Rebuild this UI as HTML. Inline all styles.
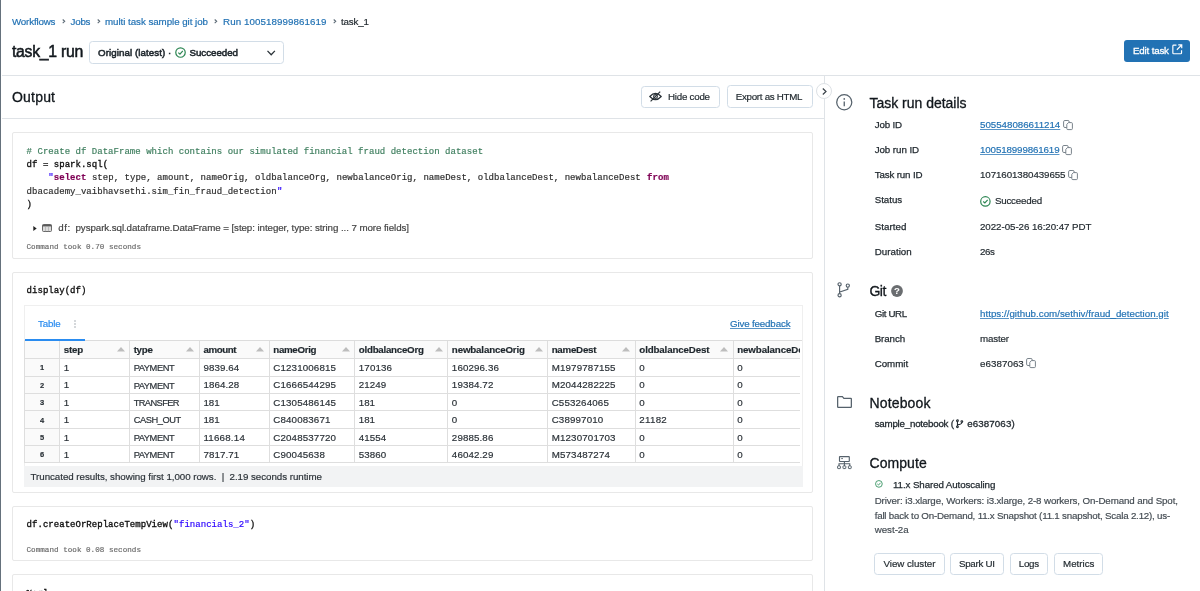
<!DOCTYPE html>
<html lang="en"><head><meta charset="utf-8"><title>task_1 run</title>
<style>
*{box-sizing:border-box;margin:0;padding:0}
html,body{width:1200px;height:591px;overflow:hidden;background:#fff}
#app{position:absolute;left:0;top:0;width:1200px;height:591px;overflow:hidden;background:#fff;will-change:transform}
body{position:relative;font-family:"Liberation Sans",sans-serif;color:#1f272d;font-size:9.75px;-webkit-text-stroke-width:0.18px}
.t{position:absolute;white-space:pre;line-height:1;display:block}
.m{font-family:"Liberation Mono",monospace}
a.t,a{color:#2272b4;text-decoration:none}
a.u{text-decoration:underline;text-underline-offset:1.2px;text-decoration-thickness:0.6px;text-decoration-color:rgba(34,114,180,.75)}
.abs{position:absolute}
.hl{position:absolute;height:1px;background:#dfe3e7}
.vl{position:absolute;width:1px;background:#dfe3e7}
.btn{position:absolute;border:1px solid #d2dde7;border-radius:3.5px;background:#fff}
.cell{position:absolute;left:11.7px;width:801.3px;border:1px solid #e8e8e8;border-radius:2px;background:#fff}
svg{position:absolute;overflow:visible}
h1,h2,h3{font-weight:400}
h2{-webkit-text-stroke-width:0.3px}

table th,table td{position:relative;border:1px solid #dedede;text-align:left;padding:0 0 0 3.4px;white-space:nowrap;overflow:hidden;color:#2b3238;font-weight:400;line-height:1;vertical-align:middle}
thead th{background:#fafafa;font-weight:700;color:#1f272d;padding-top:1px}
th.ix{background:#fafafa;font-weight:700;font-size:7.5px;text-align:center;padding:1.6px 0 0 0}
tbody td{padding-top:1px}
</style></head>
<body><div id="app">
<div class="abs" style="left:0;top:0;width:1.2px;height:591px;background:#65717c"></div>
<header>
<nav>
<a class="t" style="left:12.00px;top:16.95px;font-size:9.75px;letter-spacing:-0.162px;color:#2272b4">Workflows</a>
<a class="t" style="left:70.50px;top:16.95px;font-size:9.75px;letter-spacing:-0.203px;color:#2272b4">Jobs</a>
<a class="t" style="left:105.00px;top:16.95px;font-size:9.75px;letter-spacing:-0.044px;color:#2272b4">multi task sample git job</a>
<a class="t" style="left:223.00px;top:16.95px;font-size:9.75px;letter-spacing:0.087px;color:#2272b4">Run 100518999861619</a>
<span class="t" style="left:341.00px;top:16.95px;font-size:9.75px;letter-spacing:-0.147px;color:#1f272d">task_1</span>
<svg style="left:61.6px;top:19.3px" width="3.4" height="4.6" viewBox="0 0 3.4 4.6"><path d="M0.7 0.5 L2.7 2.3 L0.7 4.1" fill="none" stroke="#5d6b76" stroke-width="1.1"/></svg>
<svg style="left:96.6px;top:19.3px" width="3.4" height="4.6" viewBox="0 0 3.4 4.6"><path d="M0.7 0.5 L2.7 2.3 L0.7 4.1" fill="none" stroke="#5d6b76" stroke-width="1.1"/></svg>
<svg style="left:213.6px;top:19.3px" width="3.4" height="4.6" viewBox="0 0 3.4 4.6"><path d="M0.7 0.5 L2.7 2.3 L0.7 4.1" fill="none" stroke="#5d6b76" stroke-width="1.1"/></svg>
<svg style="left:332.6px;top:19.3px" width="3.4" height="4.6" viewBox="0 0 3.4 4.6"><path d="M0.7 0.5 L2.7 2.3 L0.7 4.1" fill="none" stroke="#5d6b76" stroke-width="1.1"/></svg>
</nav>
<h1 class="t" style="left:12.00px;top:43.63px;font-size:15.8px;letter-spacing:-0.285px;color:#11171c;-webkit-text-stroke:0.5px #11171c">task_1 run</h1>
<div class="btn" style="left:89px;top:41px;width:194.5px;height:22.6px"></div>
<span class="t" style="left:98.00px;top:48.05px;font-size:9.75px;letter-spacing:0.069px;color:#1f272d;-webkit-text-stroke:0.55px #1f272d">Original (latest) ·</span>
<svg style="left:175px;top:47.2px" width="11" height="11" viewBox="0 0 10 10"><circle cx="5" cy="5" r="4.3" fill="none" stroke="#2d8653" stroke-width="1.1"/><path d="M3 5.1 L4.5 6.5 L7.1 3.6" fill="none" stroke="#2d8653" stroke-width="1.1"/></svg>
<span class="t" style="left:189.50px;top:48.05px;font-size:9.75px;letter-spacing:-0.037px;color:#1f272d;-webkit-text-stroke:0.55px #1f272d">Succeeded</span>
<svg style="left:266.8px;top:50px" width="8.4" height="6" viewBox="0 0 8.4 6"><path d="M0.5 0.9 L4.2 4.8 L7.9 0.9" fill="none" stroke="#2a3238" stroke-width="1.25"/></svg>
<button class="abs" style="left:1123.5px;top:40px;width:66px;height:22px;border:0;border-radius:3px;background:#2272b4"></button>
<span class="t" style="left:1133.00px;top:46.15px;font-size:9.75px;letter-spacing:-0.176px;color:#fff;-webkit-text-stroke:0.3px #fff">Edit task</span>
<svg style="left:1171.6px;top:44.1px" width="10.6" height="10.6" viewBox="0 0 10 10"><path d="M4.2 1 H1.6 Q0.8 1 0.8 1.8 V8.4 Q0.8 9.2 1.6 9.2 H8.2 Q9 9.2 9 8.4 V5.8" fill="none" stroke="#fff" stroke-width="1.1"/><path d="M5.9 0.8 H9.2 V4.1 M9.2 0.8 L4.6 5.4" fill="none" stroke="#fff" stroke-width="1.1"/></svg>
<div class="hl" style="left:2px;top:74.6px;width:1198px"></div>
</header>
<main>
<h2 class="t" style="left:12.00px;top:89.95px;font-size:14px;letter-spacing:0.194px;color:#11171c">Output</h2>
<div class="btn" style="left:640.5px;top:85.5px;width:79px;height:22.5px"></div>
<svg style="left:649.3px;top:91.3px" width="13" height="11" viewBox="0 0 13 11"><path d="M0.8 5.5 Q6.5 -0.8 12.2 5.5 Q6.5 11.8 0.8 5.5 Z" fill="none" stroke="#2a3238" stroke-width="1.15"/><circle cx="6.5" cy="5.5" r="1.9" fill="none" stroke="#2a3238" stroke-width="1.1"/><path d="M1.6 10.4 L11.2 0.6" stroke="#2a3238" stroke-width="1.2"/></svg>
<span class="t" style="left:668.00px;top:92.25px;font-size:9.75px;letter-spacing:-0.238px;color:#1f272d">Hide code</span>
<div class="btn" style="left:726.5px;top:85px;width:86px;height:22.5px"></div>
<span class="t" style="left:735.80px;top:92.05px;font-size:9.75px;letter-spacing:-0.287px;color:#1f272d">Export as HTML</span>
<div class="hl" style="left:2px;top:117.8px;width:822px"></div>
<div class="vl" style="left:823.5px;top:75px;height:516px"></div>
<div class="abs" style="left:816px;top:83.2px;width:16px;height:16px;border-radius:50%;background:#fff;border:1px solid #dde1e5"></div>
<svg style="left:822px;top:88.3px" width="5" height="7" viewBox="0 0 5 7"><path d="M0.8 0.5 L4 3.5 L0.8 6.5" fill="none" stroke="#3a4249" stroke-width="1.2"/></svg>
<section class="cell" style="top:132px;height:126.5px"></section>
<span class="t m" style="left:26.60px;top:147.08px;font-size:9.03px;letter-spacing:0.024px;color:#3f7f5f"># Create df DataFrame which contains our simulated financial fraud detection dataset</span>
<span class="t m" style="left:26.60px;top:160.08px;font-size:9.03px;letter-spacing:0.024px;color:#0d0d0d;-webkit-text-stroke-width:0.32px">df = spark.sql(</span>
<span class="t m" style="left:26.60px;top:173.48px;font-size:9.03px;letter-spacing:0.024px;color:#0d0d0d">    </span>
<span class="t m" style="left:48.37px;top:173.48px;font-size:9.03px;letter-spacing:0.024px;color:#2a00ff">&quot;</span>
<span class="t m" style="left:53.81px;top:173.48px;font-size:9.03px;letter-spacing:0.024px;color:#7f0055;font-weight:700">select</span>
<span class="t m" style="left:86.47px;top:173.48px;font-size:9.03px;letter-spacing:0.024px;color:#2e2e2e"> step, type, amount, nameOrig, oldbalanceOrg, newbalanceOrig, nameDest, oldbalanceDest, newbalanceDest </span>
<span class="t m" style="left:647.10px;top:173.48px;font-size:9.03px;letter-spacing:0.024px;color:#7f0055;font-weight:700">from</span>
<span class="t m" style="left:26.60px;top:187.08px;font-size:9.03px;letter-spacing:0.024px;color:#2e2e2e">dbacademy_vaibhavsethi.sim_fin_fraud_detection</span>
<span class="t m" style="left:276.98px;top:187.08px;font-size:9.03px;letter-spacing:0.024px;color:#2a00ff">&quot;</span>
<span class="t m" style="left:26.60px;top:200.28px;font-size:9.03px;letter-spacing:0.024px;color:#0d0d0d;-webkit-text-stroke-width:0.32px">)</span>
<svg style="left:33px;top:225.5px" width="4" height="5" viewBox="0 0 4 5"><path d="M0.3 0 L3.7 2.5 L0.3 5 Z" fill="#222"/></svg>
<svg style="left:41.7px;top:224px" width="10" height="8" viewBox="0 0 10 8"><rect x="0.5" y="0.5" width="9" height="7" rx="1" fill="#dcdcdc" stroke="#5a5a5a" stroke-width="0.9"/><path d="M0.5 1.6 H9.5" stroke="#5a5a5a" stroke-width="1.6"/><path d="M3.5 2.6 V7.5 M6.5 2.6 V7.5" stroke="#999" stroke-width="0.5"/></svg>
<span class="t" style="left:58.25px;top:223.05px;font-size:9.75px;letter-spacing:0.578px;color:#444">df:</span>
<span class="t" style="left:75.50px;top:223.05px;font-size:9.75px;letter-spacing:-0.075px;color:#444">pyspark.sql.dataframe.DataFrame = [step: integer, type: string ... 7 more fields]</span>
<span class="t m" style="left:26.50px;top:244.07px;font-size:7.6px;letter-spacing:0.023px;color:#6d6d6d">Command took 0.70 seconds</span>
<section class="cell" style="top:272px;height:220.5px"></section>
<span class="t m" style="left:26.60px;top:286.48px;font-size:9.03px;letter-spacing:0.024px;color:#0d0d0d;-webkit-text-stroke-width:0.32px">display(df)</span>
<div class="abs" style="left:24px;top:305px;width:778.5px;height:181.5px;border:1px solid #efefef;border-bottom:0"></div>
<span class="t" style="left:38.00px;top:319.05px;font-size:9.75px;letter-spacing:-0.128px;color:#2a8cf0">Table</span>
<svg style="left:74px;top:319.5px" width="2" height="8" viewBox="0 0 2 8"><circle cx="1" cy="1" r="0.7" fill="#8a949c"/><circle cx="1" cy="4" r="0.7" fill="#8a949c"/><circle cx="1" cy="7" r="0.7" fill="#8a949c"/></svg>
<a class="t u" style="left:730.00px;top:318.55px;font-size:9.75px;letter-spacing:-0.152px;color:#2272b4">Give feedback</a>
<div class="abs" style="left:24px;top:340.3px;width:776.2px;height:122.98px;overflow:hidden">
<table style="position:absolute;left:0;top:0;border-collapse:collapse;table-layout:fixed;width:806.0px;font-size:9.75px">
<colgroup><col style="width:35.30px"><col style="width:69.95px"><col style="width:69.75px"><col style="width:69.90px"><col style="width:85.60px"><col style="width:93.00px"><col style="width:99.80px"><col style="width:87.70px"><col style="width:97.80px"><col style="width:97.20px"></colgroup>
<thead><tr style="height:17.90px">
<th></th>
<th><span class="r" style="font-size:9.75px;letter-spacing:-0.188px;font-weight:700">step</span><svg style="right:4.5px;top:6px" width="8" height="4.5" viewBox="0 0 8 4.5"><path d="M0 4.5 L4 0 L8 4.5 Z" fill="#bdbdbd"/></svg></th>
<th><span class="r" style="font-size:9.75px;letter-spacing:-0.271px;font-weight:700">type</span><svg style="right:4.5px;top:6px" width="8" height="4.5" viewBox="0 0 8 4.5"><path d="M0 4.5 L4 0 L8 4.5 Z" fill="#bdbdbd"/></svg></th>
<th><span class="r" style="font-size:9.75px;letter-spacing:-0.394px;font-weight:700">amount</span><svg style="right:4.5px;top:6px" width="8" height="4.5" viewBox="0 0 8 4.5"><path d="M0 4.5 L4 0 L8 4.5 Z" fill="#bdbdbd"/></svg></th>
<th><span class="r" style="font-size:9.75px;letter-spacing:-0.324px;font-weight:700">nameOrig</span><svg style="right:4.5px;top:6px" width="8" height="4.5" viewBox="0 0 8 4.5"><path d="M0 4.5 L4 0 L8 4.5 Z" fill="#bdbdbd"/></svg></th>
<th><span class="r" style="font-size:9.75px;letter-spacing:-0.272px;font-weight:700">oldbalanceOrg</span><svg style="right:4.5px;top:6px" width="8" height="4.5" viewBox="0 0 8 4.5"><path d="M0 4.5 L4 0 L8 4.5 Z" fill="#bdbdbd"/></svg></th>
<th><span class="r" style="font-size:9.75px;letter-spacing:-0.171px;font-weight:700">newbalanceOrig</span><svg style="right:4.5px;top:6px" width="8" height="4.5" viewBox="0 0 8 4.5"><path d="M0 4.5 L4 0 L8 4.5 Z" fill="#bdbdbd"/></svg></th>
<th><span class="r" style="font-size:9.75px;letter-spacing:-0.258px;font-weight:700">nameDest</span><svg style="right:4.5px;top:6px" width="8" height="4.5" viewBox="0 0 8 4.5"><path d="M0 4.5 L4 0 L8 4.5 Z" fill="#bdbdbd"/></svg></th>
<th><span class="r" style="font-size:9.75px;letter-spacing:-0.152px;font-weight:700">oldbalanceDest</span><svg style="right:4.5px;top:6px" width="8" height="4.5" viewBox="0 0 8 4.5"><path d="M0 4.5 L4 0 L8 4.5 Z" fill="#bdbdbd"/></svg></th>
<th><span class="r" style="font-size:9.75px;letter-spacing:-0.108px;font-weight:700">newbalanceDest</span><svg style="right:4.5px;top:6px" width="8" height="4.5" viewBox="0 0 8 4.5"><path d="M0 4.5 L4 0 L8 4.5 Z" fill="#bdbdbd"/></svg></th>
</tr></thead><tbody>
<tr style="height:17.38px"><th class="ix">1</th><td>1</td><td><span class="r" style="font-size:9.3px;letter-spacing:-0.427px;position:relative;top:0.5px">PAYMENT</span></td><td><span class="r" style="font-size:9.75px;letter-spacing:0.100px">9839.64</span></td><td><span class="r" style="font-size:9.75px;letter-spacing:0.147px">C1231006815</span></td><td><span class="r" style="font-size:9.75px;letter-spacing:0.091px">170136</span></td><td><span class="r" style="font-size:9.75px;letter-spacing:0.120px">160296.36</span></td><td><span class="r" style="font-size:9.75px;letter-spacing:0.154px">M1979787155</span></td><td>0</td><td>0</td></tr>
<tr style="height:17.38px"><th class="ix">2</th><td>1</td><td><span class="r" style="font-size:9.3px;letter-spacing:-0.427px;position:relative;top:0.5px">PAYMENT</span></td><td><span class="r" style="font-size:9.75px;letter-spacing:0.100px">1864.28</span></td><td><span class="r" style="font-size:9.75px;letter-spacing:0.147px">C1666544295</span></td><td><span class="r" style="font-size:9.75px;letter-spacing:0.069px">21249</span></td><td><span class="r" style="font-size:9.75px;letter-spacing:0.111px">19384.72</span></td><td><span class="r" style="font-size:9.75px;letter-spacing:0.154px">M2044282225</span></td><td>0</td><td>0</td></tr>
<tr style="height:17.38px"><th class="ix">3</th><td>1</td><td><span class="r" style="font-size:9.3px;letter-spacing:-0.601px;position:relative;top:0.5px">TRANSFER</span></td><td><span class="r" style="font-size:9.75px;letter-spacing:-0.041px">181</span></td><td><span class="r" style="font-size:9.75px;letter-spacing:0.147px">C1305486145</span></td><td><span class="r" style="font-size:9.75px;letter-spacing:-0.041px">181</span></td><td>0</td><td><span class="r" style="font-size:9.75px;letter-spacing:0.145px">C553264065</span></td><td>0</td><td>0</td></tr>
<tr style="height:17.38px"><th class="ix">4</th><td>1</td><td><span class="r" style="font-size:9.3px;letter-spacing:-0.446px;position:relative;top:0.5px">CASH_OUT</span></td><td><span class="r" style="font-size:9.75px;letter-spacing:-0.041px">181</span></td><td><span class="r" style="font-size:9.75px;letter-spacing:0.145px">C840083671</span></td><td><span class="r" style="font-size:9.75px;letter-spacing:-0.041px">181</span></td><td>0</td><td><span class="r" style="font-size:9.75px;letter-spacing:0.141px">C38997010</span></td><td><span class="r" style="font-size:9.75px;letter-spacing:0.252px">21182</span></td><td>0</td></tr>
<tr style="height:17.38px"><th class="ix">5</th><td>1</td><td><span class="r" style="font-size:9.3px;letter-spacing:-0.427px;position:relative;top:0.5px">PAYMENT</span></td><td><span class="r" style="font-size:9.75px;letter-spacing:0.214px">11668.14</span></td><td><span class="r" style="font-size:9.75px;letter-spacing:0.147px">C2048537720</span></td><td><span class="r" style="font-size:9.75px;letter-spacing:0.069px">41554</span></td><td><span class="r" style="font-size:9.75px;letter-spacing:0.111px">29885.86</span></td><td><span class="r" style="font-size:9.75px;letter-spacing:0.154px">M1230701703</span></td><td>0</td><td>0</td></tr>
<tr style="height:17.38px"><th class="ix">6</th><td>1</td><td><span class="r" style="font-size:9.3px;letter-spacing:-0.427px;position:relative;top:0.5px">PAYMENT</span></td><td><span class="r" style="font-size:9.75px;letter-spacing:0.100px">7817.71</span></td><td><span class="r" style="font-size:9.75px;letter-spacing:0.141px">C90045638</span></td><td><span class="r" style="font-size:9.75px;letter-spacing:0.069px">53860</span></td><td><span class="r" style="font-size:9.75px;letter-spacing:0.111px">46042.29</span></td><td><span class="r" style="font-size:9.75px;letter-spacing:0.151px">M573487274</span></td><td>0</td><td>0</td></tr>
</tbody></table></div>
<div class="abs" style="left:24.5px;top:340.3px;width:777.5px;height:1px;background:#dcdcdc"></div>
<div class="abs" style="left:24.5px;top:339px;width:60.5px;height:2px;background:#2a8cf0"></div>
<div class="abs" style="left:24px;top:465.6px;width:778.5px;height:21px;background:#f2f3f4"></div>
<span class="t" style="left:30.50px;top:471.95px;font-size:9.75px;letter-spacing:-0.041px;color:#2b3238">Truncated results, showing first 1,000 rows.  |  2.19 seconds runtime</span>
<section class="cell" style="top:505.5px;height:55px"></section>
<span class="t m" style="left:26.60px;top:520.33px;font-size:9.03px;letter-spacing:0.024px;color:#0d0d0d;-webkit-text-stroke-width:0.32px">df.createOrReplaceTempView(</span>
<span class="t m" style="left:173.56px;top:520.33px;font-size:9.03px;letter-spacing:0.024px;color:#2a00ff">&quot;financials_2&quot;</span>
<span class="t m" style="left:249.76px;top:520.33px;font-size:9.03px;letter-spacing:0.024px;color:#0d0d0d;-webkit-text-stroke-width:0.32px">)</span>
<span class="t m" style="left:26.50px;top:546.77px;font-size:7.6px;letter-spacing:0.023px;color:#6d6d6d">Command took 0.08 seconds</span>
<section class="cell" style="top:573.5px;height:60px"></section>
<span class="t m" style="left:26.60px;top:589.48px;font-size:9.03px;letter-spacing:0.024px;color:#0d0d0d;-webkit-text-stroke-width:0.32px">%sql</span>
</main>
<aside>
<svg style="left:835.6px;top:94.1px" width="16.5" height="16.5" viewBox="0 0 16.5 16.5"><circle cx="8.25" cy="8.25" r="7.55" fill="none" stroke="#55616b" stroke-width="1.25"/><path d="M8.25 7.4 V12.3" stroke="#55616b" stroke-width="1.3"/><circle cx="8.25" cy="4.9" r="0.85" fill="#55616b"/></svg>
<h2 class="t" style="left:869.50px;top:95.65px;font-size:14px;letter-spacing:-0.019px;color:#11171c">Task run details</h2>
<span class="t" style="left:874.70px;top:120.05px;font-size:9.75px;letter-spacing:-0.177px;color:#1f272d;-webkit-text-stroke:0.25px #1f272d">Job ID</span>
<a class="t u" style="left:980.00px;top:120.05px;font-size:9.75px;letter-spacing:-0.023px;color:#2272b4">505548086611214</a>
<svg style="left:1062.5px;top:119.7px" width="10" height="10" viewBox="0 0 10 10"><rect x="0.6" y="0.5" width="5.6" height="7" rx="1.3" fill="none" stroke="#727c85" stroke-width="0.95"/><path d="M5.4 2.6 H8.4 Q9.4 2.6 9.4 3.6 V8.6 Q9.4 9.6 8.4 9.6 H4.8 Q3.8 9.6 3.8 8.6 V4.4 Z" fill="#fff" stroke="#727c85" stroke-width="0.95"/></svg>
<span class="t" style="left:874.70px;top:144.95px;font-size:9.75px;letter-spacing:-0.065px;color:#1f272d;-webkit-text-stroke:0.25px #1f272d">Job run ID</span>
<a class="t u" style="left:980.00px;top:144.95px;font-size:9.75px;letter-spacing:-0.125px;color:#2272b4">100518999861619</a>
<svg style="left:1061.6px;top:144.7px" width="10" height="10" viewBox="0 0 10 10"><rect x="0.6" y="0.5" width="5.6" height="7" rx="1.3" fill="none" stroke="#727c85" stroke-width="0.95"/><path d="M5.4 2.6 H8.4 Q9.4 2.6 9.4 3.6 V8.6 Q9.4 9.6 8.4 9.6 H4.8 Q3.8 9.6 3.8 8.6 V4.4 Z" fill="#fff" stroke="#727c85" stroke-width="0.95"/></svg>
<span class="t" style="left:874.70px;top:169.95px;font-size:9.75px;letter-spacing:-0.151px;color:#1f272d;-webkit-text-stroke:0.25px #1f272d">Task run ID</span>
<span class="t" style="left:980.00px;top:169.95px;font-size:9.75px;letter-spacing:-0.084px;color:#1f272d">1071601380439655</span>
<svg style="left:1067.8px;top:169.7px" width="10" height="10" viewBox="0 0 10 10"><rect x="0.6" y="0.5" width="5.6" height="7" rx="1.3" fill="none" stroke="#727c85" stroke-width="0.95"/><path d="M5.4 2.6 H8.4 Q9.4 2.6 9.4 3.6 V8.6 Q9.4 9.6 8.4 9.6 H4.8 Q3.8 9.6 3.8 8.6 V4.4 Z" fill="#fff" stroke="#727c85" stroke-width="0.95"/></svg>
<span class="t" style="left:874.70px;top:194.75px;font-size:9.75px;letter-spacing:-0.031px;color:#1f272d;-webkit-text-stroke:0.25px #1f272d">Status</span>
<svg style="left:980.2px;top:196.1px" width="10.8" height="10.8" viewBox="0 0 10 10"><circle cx="5" cy="5" r="4.35" fill="none" stroke="#2d8653" stroke-width="1.1"/><path d="M3 5.1 L4.5 6.5 L7.1 3.6" fill="none" stroke="#2d8653" stroke-width="1.1"/></svg>
<span class="t" style="left:994.90px;top:196.05px;font-size:9.75px;letter-spacing:-0.200px;color:#1f272d">Succeeded</span>
<span class="t" style="left:874.70px;top:222.15px;font-size:9.75px;letter-spacing:0.060px;color:#1f272d;-webkit-text-stroke:0.25px #1f272d">Started</span>
<span class="t" style="left:980.00px;top:222.15px;font-size:9.75px;letter-spacing:-0.057px;color:#1f272d">2022-05-26 16:20:47 PDT</span>
<span class="t" style="left:874.70px;top:246.95px;font-size:9.75px;letter-spacing:0.020px;color:#1f272d;-webkit-text-stroke:0.25px #1f272d">Duration</span>
<span class="t" style="left:980.00px;top:246.95px;font-size:9.75px;letter-spacing:-0.367px;color:#1f272d">26s</span>
<svg style="left:836.8px;top:282.3px" width="13" height="15.5" viewBox="0 0 13 15.5"><circle cx="2.6" cy="2.3" r="1.6" fill="none" stroke="#55616b" stroke-width="1.15"/><circle cx="2.6" cy="13.2" r="1.6" fill="none" stroke="#55616b" stroke-width="1.15"/><circle cx="10.8" cy="3.6" r="1.6" fill="none" stroke="#55616b" stroke-width="1.15"/><path d="M2.6 3.9 V11.6 M10.8 5.2 V7.4 L2.8 10" fill="none" stroke="#55616b" stroke-width="1.15"/></svg>
<h2 class="t" style="left:869.50px;top:283.75px;font-size:14px;letter-spacing:-0.545px;color:#11171c">Git</h2>
<svg style="left:890.7px;top:284.8px" width="12" height="12" viewBox="0 0 12 12"><circle cx="6" cy="6" r="5.9" fill="#6a6d70"/><text x="6" y="9.4" font-family="Liberation Sans,sans-serif" font-weight="700" font-size="9.6" text-anchor="middle" fill="#fff" stroke="none">?</text></svg>
<span class="t" style="left:874.70px;top:308.95px;font-size:9.75px;letter-spacing:-0.365px;color:#1f272d;-webkit-text-stroke:0.25px #1f272d">Git URL</span>
<a class="t u" style="left:980.00px;top:308.95px;font-size:9.75px;letter-spacing:0.014px;color:#2272b4">https://github.com/sethiv/fraud_detection.git</a>
<span class="t" style="left:874.70px;top:334.05px;font-size:9.75px;letter-spacing:-0.081px;color:#1f272d;-webkit-text-stroke:0.25px #1f272d">Branch</span>
<span class="t" style="left:980.00px;top:334.05px;font-size:9.75px;letter-spacing:-0.163px;color:#1f272d">master</span>
<span class="t" style="left:874.70px;top:358.55px;font-size:9.75px;letter-spacing:-0.019px;color:#1f272d;-webkit-text-stroke:0.25px #1f272d">Commit</span>
<span class="t" style="left:980.00px;top:358.55px;font-size:9.75px;letter-spacing:0.058px;color:#1f272d">e6387063</span>
<svg style="left:1026.3px;top:358.2px" width="10" height="10" viewBox="0 0 10 10"><rect x="0.6" y="0.5" width="5.6" height="7" rx="1.3" fill="none" stroke="#727c85" stroke-width="0.95"/><path d="M5.4 2.6 H8.4 Q9.4 2.6 9.4 3.6 V8.6 Q9.4 9.6 8.4 9.6 H4.8 Q3.8 9.6 3.8 8.6 V4.4 Z" fill="#fff" stroke="#727c85" stroke-width="0.95"/></svg>
<svg style="left:836.6px;top:396.4px" width="15" height="12" viewBox="0 0 15 12"><path d="M0.65 1.2 Q0.65 0.65 1.2 0.65 H5.4 L6.9 2.3 H13.8 Q14.35 2.3 14.35 2.85 V10.8 Q14.35 11.35 13.8 11.35 H1.2 Q0.65 11.35 0.65 10.8 Z" fill="none" stroke="#55616b" stroke-width="1.25"/></svg>
<h2 class="t" style="left:869.50px;top:395.85px;font-size:14px;letter-spacing:0.152px;color:#11171c">Notebook</h2>
<span class="t" style="left:874.70px;top:419.15px;font-size:9.75px;letter-spacing:-0.227px;color:#1f272d;-webkit-text-stroke:0.3px #1f272d">sample_notebook (</span>
<svg style="left:955.6px;top:419.2px" width="7.2" height="9.6" viewBox="0 0 13 15.5"><circle cx="2.6" cy="2.3" r="1.6" fill="none" stroke="#1f272d" stroke-width="1.9"/><circle cx="2.6" cy="13.2" r="1.6" fill="none" stroke="#1f272d" stroke-width="1.9"/><circle cx="10.6" cy="3.8" r="1.6" fill="none" stroke="#1f272d" stroke-width="1.9"/><path d="M2.6 3.9 V11.6 M10.6 5.4 Q10.4 8.6 2.8 9.6" fill="none" stroke="#1f272d" stroke-width="1.9"/></svg>
<span class="t" style="left:967.20px;top:419.15px;font-size:9.75px;letter-spacing:0.107px;color:#1f272d;-webkit-text-stroke:0.3px #1f272d">e6387063)</span>
<svg style="left:836.9px;top:455.9px" width="14.8" height="13.2" viewBox="0 0 14.8 13.2"><rect x="2.5" y="0.6" width="9.8" height="4.9" rx="0.5" fill="none" stroke="#55616b" stroke-width="1.15"/><path d="M4.2 2.6 H6" stroke="#55616b" stroke-width="0.9"/><path d="M7.4 5.5 V7.7 M2 9.9 V7.7 H12.8 V9.9 M7.4 7.7 V9.9" fill="none" stroke="#55616b" stroke-width="1.1"/><rect x="0.6" y="9.9" width="2.8" height="2.7" rx="0.5" fill="none" stroke="#55616b" stroke-width="1"/><rect x="6" y="9.9" width="2.8" height="2.7" rx="0.5" fill="none" stroke="#55616b" stroke-width="1"/><rect x="11.4" y="9.9" width="2.8" height="2.7" rx="0.5" fill="none" stroke="#55616b" stroke-width="1"/></svg>
<h2 class="t" style="left:869.50px;top:455.95px;font-size:14px;letter-spacing:0.065px;color:#11171c">Compute</h2>
<svg style="left:875px;top:479.8px" width="7.8" height="7.8" viewBox="0 0 10 10"><circle cx="5" cy="5" r="4.3" fill="none" stroke="#2f8f5b" stroke-width="1.1"/><path d="M3 5.1 L4.5 6.5 L7.1 3.6" fill="none" stroke="#2f8f5b" stroke-width="1.1"/></svg>
<span class="t" style="left:893.00px;top:479.55px;font-size:9.75px;letter-spacing:-0.097px;color:#1f272d;-webkit-text-stroke:0.25px #1f272d">11.x Shared Autoscaling</span>
<span class="t" style="left:874.70px;top:496.35px;font-size:9.75px;letter-spacing:-0.116px;color:#444c53">Driver: i3.xlarge, Workers: i3.xlarge, 2-8 workers, On-Demand and Spot,</span>
<span class="t" style="left:874.70px;top:510.55px;font-size:9.75px;letter-spacing:-0.204px;color:#444c53">fall back to On-Demand, 11.x Snapshot (11.1 snapshot, Scala 2.12), us-</span>
<span class="t" style="left:874.70px;top:524.65px;font-size:9.75px;letter-spacing:-0.023px;color:#444c53">west-2a</span>
<div class="btn" style="left:874.4px;top:553px;width:70.3px;height:22px"></div>
<span class="t" style="left:883.50px;top:558.55px;font-size:9.75px;letter-spacing:-0.036px;color:#1f272d">View cluster</span>
<div class="btn" style="left:950px;top:553px;width:54px;height:22px"></div>
<span class="t" style="left:959.00px;top:558.55px;font-size:9.75px;letter-spacing:-0.277px;color:#1f272d">Spark UI</span>
<div class="btn" style="left:1009.7px;top:553px;width:38.7px;height:22px"></div>
<span class="t" style="left:1018.70px;top:558.55px;font-size:9.75px;letter-spacing:-0.219px;color:#1f272d">Logs</span>
<div class="btn" style="left:1054px;top:553px;width:49.4px;height:22px"></div>
<span class="t" style="left:1063.00px;top:558.55px;font-size:9.75px;letter-spacing:0.013px;color:#1f272d">Metrics</span>
</aside>
</div></body></html>
